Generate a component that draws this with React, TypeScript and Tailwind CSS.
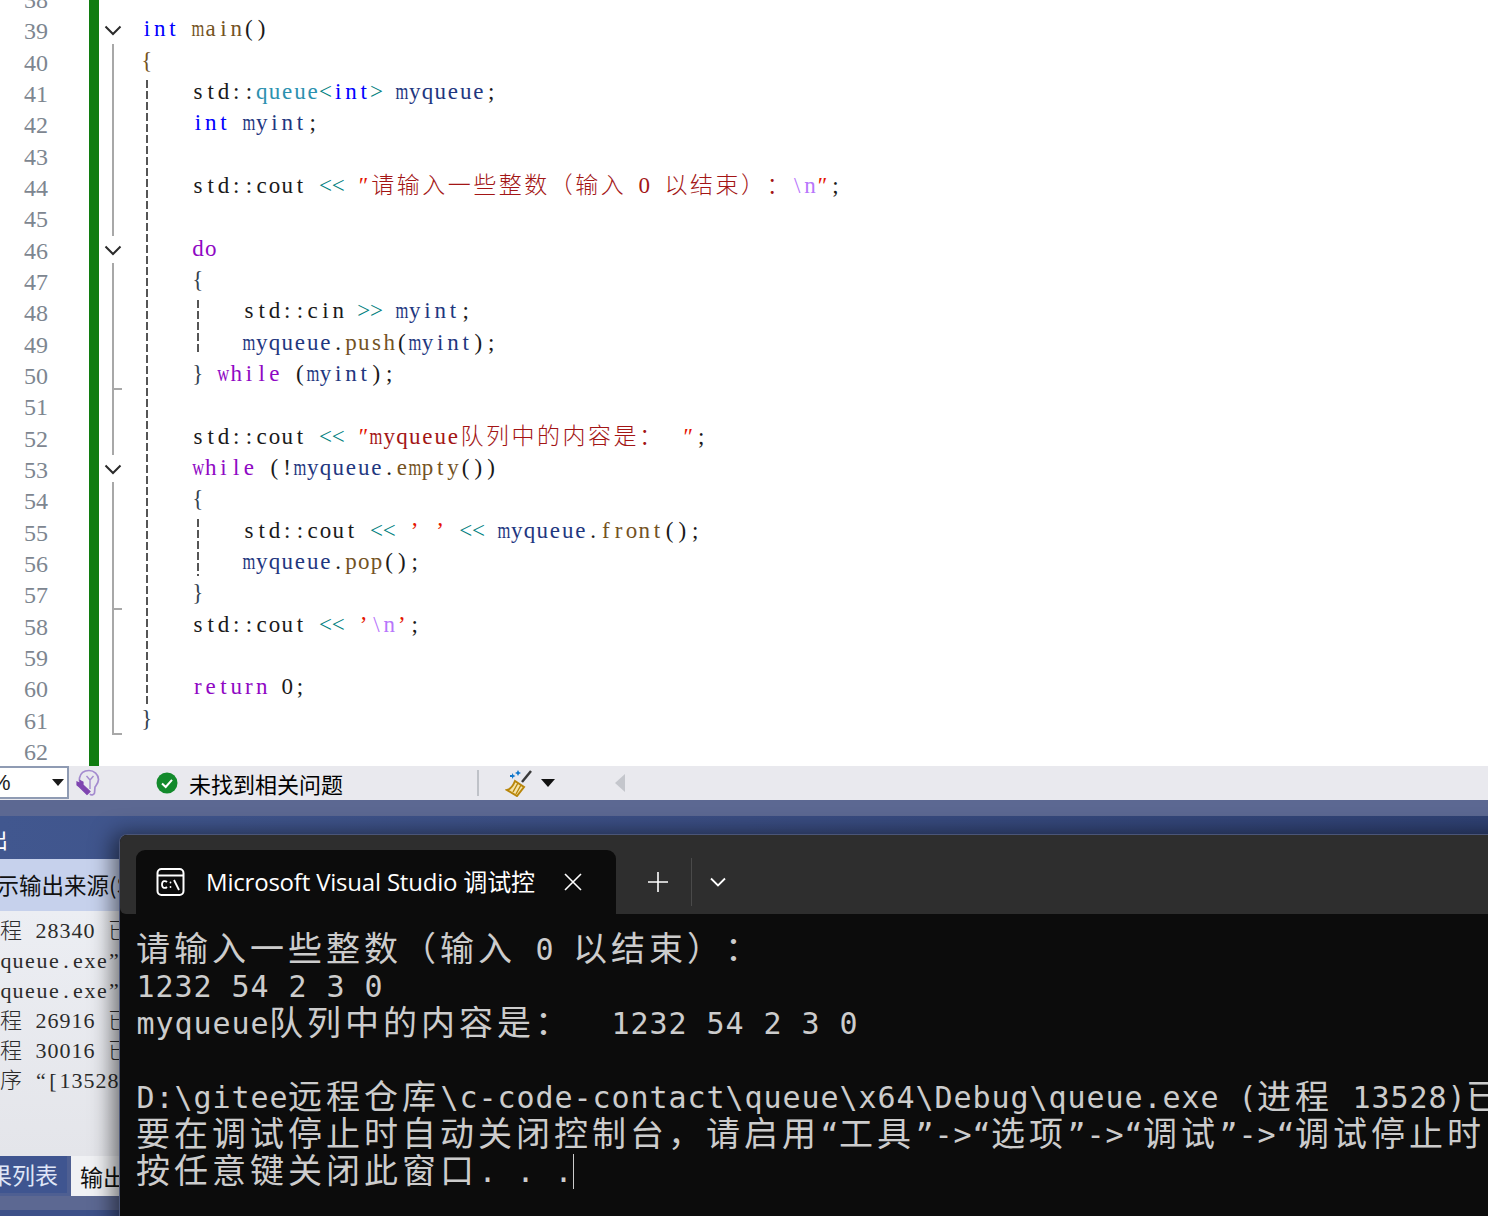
import React from "react";

type Tok = [string, string?];

const KW = "#0000ff";
const CTRL = "#8f08c4";
const FN = "#74531f";
const TYPE = "#2b91af";
const OP = "#008080";
const STR = "#a31515";
const ESC = "#b776fb";
const VAR = "#1f377f";
const BK = "#1a1a1a";
const QT = "#e51400";

const isWide = (c: string) => /[\u3000-\u303f\u3400-\u9fff\uff00-\uffef]/.test(c);

function Cells({ text, color, wideClass, narrowClass, squeeze }: { text: string; color?: string; wideClass: string; narrowClass: string; squeeze?: boolean }) {
  return (
    <>
      {Array.from(text).map((c, i) => {
        if (c === "\u2009") return <span key={i} className="inline-block w-[6px]">{"\u00a0"}</span>;
        const cls = isWide(c) ? wideClass : narrowClass;
        return (
          <span key={i} className={cls} style={color ? { color } : undefined}>
            {squeeze && /[mwMW]/.test(c) ? <span className="inline-block scale-x-[0.72]">{c}</span> : c === " " ? "\u00a0" : c}
          </span>
        );
      })}
    </>
  );
}

const CODE_W = "inline-flex w-[25.5px] justify-center font-['Noto_Sans_CJK_SC',sans-serif] text-[23px] font-light leading-none";
const CODE_N = "inline-flex w-[12.75px] justify-center font-['Liberation_Serif',serif] text-[23px] leading-none";
const TERM_W = "inline-flex w-[38px] -translate-x-[2px] -translate-y-[3px] justify-center font-['Noto_Sans_CJK_SC',sans-serif] text-[34px] leading-none";
const TERM_N = "inline-flex w-[19px] justify-center font-['DejaVu_Sans_Mono',monospace] text-[30px] leading-none";
const OUT_W = "inline-flex w-[24px] justify-center font-['Noto_Sans_CJK_SC',sans-serif] text-[22px] font-light leading-none";
const OUT_N = "inline-flex w-[12px] justify-center font-['Liberation_Serif',serif] text-[22px] leading-none";

type Fold = "none" | "open" | "line" | "corner" | "end";

const lines: { n: number; fold: Fold; indent: number; toks: Tok[] }[] = [
  { n: 38, fold: "none", indent: 0, toks: [] },
  { n: 39, fold: "open", indent: 0, toks: [["int", KW], [" "], ["main", FN], ["()", BK]] },
  { n: 40, fold: "line", indent: 0, toks: [["{", FN]] },
  { n: 41, fold: "line", indent: 1, toks: [["std::", BK], ["queue", TYPE], ["<", OP], ["int", KW], [">", OP], [" "], ["myqueue", VAR], [";", BK]] },
  { n: 42, fold: "line", indent: 1, toks: [["int", KW], [" "], ["myint", VAR], [";", BK]] },
  { n: 43, fold: "line", indent: 0, toks: [] },
  { n: 44, fold: "line", indent: 1, toks: [["std::cout", BK], [" "], ["<<", OP], [" "], ["″", QT], ["请输入一些整数（输入 0 以结束）：", STR], ["\\n", ESC], ["″", QT], [";", BK]] },
  { n: 45, fold: "line", indent: 0, toks: [] },
  { n: 46, fold: "open", indent: 1, toks: [["do", CTRL]] },
  { n: 47, fold: "line", indent: 1, toks: [["{", "#33424f"]] },
  { n: 48, fold: "line", indent: 2, toks: [["std::cin", BK], [" "], [">>", OP], [" "], ["myint", VAR], [";", BK]] },
  { n: 49, fold: "line", indent: 2, toks: [["myqueue", VAR], [".", BK], ["push", FN], ["(", BK], ["myint", VAR], [");", BK]] },
  { n: 50, fold: "corner", indent: 1, toks: [["}", "#33424f"], [" "], ["while", CTRL], [" "], ["(", BK], ["myint", VAR], [");", BK]] },
  { n: 51, fold: "line", indent: 0, toks: [] },
  { n: 52, fold: "line", indent: 1, toks: [["std::cout", BK], [" "], ["<<", OP], [" "], ["″", QT], ["myqueue队列中的内容是： \u2009", STR], ["″", QT], [";", BK]] },
  { n: 53, fold: "open", indent: 1, toks: [["while", CTRL], [" "], ["(!", BK], ["myqueue", VAR], [".", BK], ["empty", FN], ["())", BK]] },
  { n: 54, fold: "line", indent: 1, toks: [["{", "#33424f"]] },
  { n: 55, fold: "line", indent: 2, toks: [["std::cout", BK], [" "], ["<<", OP], [" "], ["’", QT], [" "], ["’", QT], [" "], ["<<", OP], [" "], ["myqueue", VAR], [".", BK], ["front", FN], ["();", BK]] },
  { n: 56, fold: "line", indent: 2, toks: [["myqueue", VAR], [".", BK], ["pop", FN], ["();", BK]] },
  { n: 57, fold: "corner", indent: 1, toks: [["}", "#33424f"]] },
  { n: 58, fold: "line", indent: 1, toks: [["std::cout", BK], [" "], ["<<", OP], [" "], ["’", QT], ["\\n", ESC], ["’", QT], [";", BK]] },
  { n: 59, fold: "line", indent: 0, toks: [] },
  { n: 60, fold: "line", indent: 1, toks: [["return", CTRL], [" "], ["0", BK], [";", BK]] },
  { n: 61, fold: "end", indent: 0, toks: [["}", "#33424f"]] },
  { n: 62, fold: "none", indent: 0, toks: [] },
];

function FoldCell({ fold }: { fold: Fold }) {
  if (fold === "open") {
    return (
      <div className="relative h-full w-[43px]">
        <svg className="absolute left-[5px] top-[7px]" width="18" height="14" viewBox="0 0 18 14" fill="none">
          <path d="M1.5 3.5 L9 11 L16.5 3.5" stroke="#2b2b2b" strokeWidth="2" />
        </svg>
        <div className="absolute bottom-0 left-[13px] h-[4px] w-[2px] bg-[#a8a8a8]" />
      </div>
    );
  }
  if (fold === "line") {
    return (
      <div className="h-full w-[43px] pl-[13px]">
        <div className="h-full w-[2px] bg-[#a8a8a8]" />
      </div>
    );
  }
  if (fold === "corner") {
    return (
      <div className="relative h-full w-[43px] pl-[13px]">
        <div className="h-full w-[2px] bg-[#a8a8a8]" />
        <div className="absolute bottom-[2px] left-[13px] h-[2px] w-[10px] bg-[#a8a8a8]" />
      </div>
    );
  }
  if (fold === "end") {
    return (
      <div className="h-full w-[43px] pl-[13px]">
        <div className="h-[calc(100%-2px)] w-[10px] border-b-2 border-l-2 border-[#a8a8a8]" />
      </div>
    );
  }
  return <div className="h-full w-[43px]" />;
}

function CodeRow({ line }: { line: (typeof lines)[number] }) {
  const pad = line.indent === 0 ? "pl-0" : line.indent === 1 ? "pl-[51px]" : "pl-[102px]";
  return (
    <div className="flex h-[31.33px] items-stretch">
      <div className="w-[89px] pr-[41px] text-right font-['Liberation_Serif',serif] text-[24px] leading-[31.33px] text-[#7d8690]">{line.n}</div>
      <div className="w-[10px] bg-[#107c10]" />
      <FoldCell fold={line.fold} />
      <div className={`-ml-[1.5px] -mt-[1px] flex-1 whitespace-nowrap leading-[31.33px] ${pad}`}>
        {line.toks.map((t, i) => (
          <Cells key={i} text={t[0]} color={t[1]} wideClass={CODE_W} narrowClass={CODE_N} squeeze />
        ))}
      </div>
    </div>
  );
}

const outRows = ["程 28340 已", "queue.exe”", "queue.exe”", "程 26916 已", "程 30016 已", "序 “[13528"];

const termRows = [
  "请输入一些整数（输入 0 以结束）：",
  "1232 54 2 3 0",
  "myqueue队列中的内容是：  1232 54 2 3 0",
  "",
  "D:\\gitee远程仓库\\c-code-contact\\queue\\x64\\Debug\\queue.exe (进程 13528)已",
  "要在调试停止时自动关闭控制台，请启用“工具”->“选项”->“调试”->“调试停止时",
  "按任意键关闭此窗口. . .",
];

const GUIDE = "absolute w-[2px] bg-[repeating-linear-gradient(to_bottom,#555_0,#555_8px,transparent_8px,transparent_11px)]";

export default function App() {
  return (
    <div className="flex h-[1216px] w-[1488px] flex-col overflow-hidden bg-white">
      {/* Editor */}
      <div className="relative h-[766px] shrink-0 overflow-hidden bg-white">
        <div className="-mt-[15px]">
          {lines.map((l) => (
            <CodeRow key={l.n} line={l} />
          ))}
        </div>
        <div className={`${GUIDE} left-[146px] top-[80px] h-[625px]`} />
        <div className={`${GUIDE} left-[197px] top-[300px] h-[55px]`} />
        <div className={`${GUIDE} left-[197px] top-[519px] h-[57px]`} />
      </div>

      {/* Status bar */}
      <div className="flex h-[34px] shrink-0 items-center bg-[#e9e9ee]">
        <div className="flex h-[33px] w-[69px] items-center justify-between self-start border-2 border-l-0 border-[#8f9bb3] bg-white pr-[3px]">
          <span className="-ml-[9px] font-['Liberation_Sans',sans-serif] text-[22px] text-[#222]">%</span>
          <svg width="12" height="7" viewBox="0 0 12 7"><path d="M0 0 H12 L6 7 Z" fill="#1a1a1a" /></svg>
        </div>
        <svg className="ml-[6px]" width="26" height="28" viewBox="0 0 26 28" fill="none" stroke="#a48bcf" strokeWidth="1.7">
          <path d="M8 17 C5 15 4 12 4.5 9 C5.5 4 9.5 1.5 14 1.5 C19 1.5 23.5 5.5 23.5 10.5 C23.5 14 21.5 16 20 18 L19.5 24 C19 26 16 26.5 15 25" />
          <path d="M15 20 V11 M15 11 L11.5 7 M15 11 L18.5 7" strokeWidth="1.4" />
          <path d="M2 13 L2 16 L4.5 18 L12 25.5 L15 22.5 L8 16 L8 13 L5 11.5 L5.5 14.5 Z" fill="#7f45b0" stroke="#7f45b0" strokeWidth="1.2" />
        </svg>
        <svg className="ml-[55px]" width="22" height="22" viewBox="0 0 22 22">
          <circle cx="11" cy="11" r="10.5" fill="#138a2c" />
          <path d="M6 11.5 L9.7 15 L16 7.8" fill="none" stroke="white" strokeWidth="2" />
        </svg>
        <span className="ml-[11px] font-['Noto_Sans_CJK_SC',sans-serif] text-[22px] leading-none text-black">未找到相关问题</span>
        <div className="ml-[134px] h-[26px] w-[2px] bg-[#bfc2c8]" />
        <svg className="ml-[26px]" width="30" height="28" viewBox="0 0 30 28" fill="none">
          <path d="M26 2 L17 13" stroke="#3a3a3a" strokeWidth="2.5" />
          <path d="M10 12 L19 18 L12 27 L2 21 C6 20 8 17 10 12 Z" fill="#f5e3a8" stroke="#b8860b" strokeWidth="2" />
          <path d="M13 14 L8 23 M16 16 L11 25" stroke="#b8860b" strokeWidth="1.4" />
          <path d="M5 6 L7 6 L7 4 L8.5 6 L10.5 7 L8.5 8 L7 10 L7 8 L5 8 Z M13 1 L14 3 L16 4 L14 5 L13 7 L12 5 L10 4 L12 3 Z" fill="#1177cc" />
        </svg>
        <svg className="ml-[6px]" width="14" height="8" viewBox="0 0 14 8"><path d="M0 0 H14 L7 8 Z" fill="#111" /></svg>
        <svg className="ml-[60px]" width="10" height="18" viewBox="0 0 10 18"><path d="M10 0 V18 L0 9 Z" fill="#c4c6cc" /></svg>
      </div>

      {/* Lower area */}
      <div className="relative flex min-h-0 flex-1 flex-col overflow-hidden">
        <div className="h-[16px] shrink-0 bg-[#5c6892]" />
        <div className="h-[43px] shrink-0 bg-gradient-to-r from-[#41578f] via-[#3a4d82] to-[#2f4173] pt-[8px] font-['Noto_Sans_CJK_SC',sans-serif] text-[22px] leading-[28px] text-white">
          <span className="-ml-[36px] inline-block">输出</span>
        </div>
        <div className="flex h-[52px] shrink-0 items-center bg-[#c6d1ec] font-['Noto_Sans_CJK_SC',sans-serif] text-[22.5px] whitespace-nowrap text-[#111]">
          <span className="-ml-[26px]">显示输出来源(S)</span>
        </div>
        <div className="h-[245px] shrink-0 bg-gradient-to-b from-[#eceef3] to-[#e4e5ea] pt-[6px]">
          {outRows.map((r, i) => (
            <div key={i} className={`h-[30px] whitespace-nowrap leading-[30px] text-[#2b2b2b] ${r.startsWith("queue") ? "" : "-ml-[1px]"}`}>
              <Cells text={r} wideClass={OUT_W} narrowClass={OUT_N} />
            </div>
          ))}
        </div>
        <div className="flex h-[40px] shrink-0 items-start gap-[4px] bg-[#4e5f92]">
          <div className="flex h-[37px] w-[67px] items-center justify-end bg-[#3f5590] pr-[9px] font-['Noto_Sans_CJK_SC',sans-serif] text-[23px] whitespace-nowrap text-[#dfe6f7]">结果列表</div>
          <div className="flex h-[40px] w-[60px] items-center bg-[#f0f1f4] pl-[9px] font-['Noto_Sans_CJK_SC',sans-serif] text-[23px] whitespace-nowrap text-[#111]">输出</div>
        </div>
        <div className="h-[14px] shrink-0 bg-[#5c6892]" />
        <div className="flex-1 bg-[#3d5088]" />

        {/* Terminal window */}
        <div className="absolute left-[119px] top-[34px] flex h-[400px] w-[1400px] flex-col overflow-hidden rounded-tl-[8px] border-l border-t border-[#4a5578] bg-[#0c0c0c] shadow-[-6px_0_22px_rgba(0,0,0,0.55)]">
          <div className="flex h-[79px] shrink-0 items-end rounded-b-[6px] bg-[#2e2e2e] pl-[16px]">
            <div className="flex h-[64px] w-[480px] items-center rounded-t-[9px] bg-[#0c0c0c] pl-[20px]">
              <svg width="29" height="30" viewBox="0 0 29 30" fill="none" stroke="white" strokeWidth="2">
                <rect x="1.5" y="2" width="26" height="26" rx="4" />
                <path d="M1.5 8.5 H27.5" />
                <path d="M11 15 C9.5 13.5 6 13.5 6 17.5 C6 21.5 9.5 21.5 11 20" strokeWidth="1.8" />
                <circle cx="14.5" cy="15.5" r="0.9" fill="white" stroke="none" />
                <circle cx="14.5" cy="20" r="0.9" fill="white" stroke="none" />
                <path d="M18 13 L23 23" strokeWidth="1.8" />
              </svg>
              <span className="ml-[21px] w-[333px] whitespace-nowrap font-['Open_Sans','Noto_Sans_CJK_SC',sans-serif] text-[24px] leading-none tracking-[-0.2px] text-white">Microsoft Visual Studio 调试控</span>
              <svg className="ml-[24px]" width="20" height="20" viewBox="0 0 20 20" stroke="white" strokeWidth="1.6"><path d="M2 2 L18 18 M18 2 L2 18" /></svg>
            </div>
            <div className="mb-[8px] ml-[32px] flex h-[48px] items-center">
              <svg width="20" height="20" viewBox="0 0 20 20" stroke="white" strokeWidth="1.6"><path d="M10 0 V20 M0 10 H20" /></svg>
              <div className="ml-[23px] h-[48px] w-px bg-[#4a4a4a]" />
              <svg className="ml-[18px]" width="16" height="10" viewBox="0 0 16 10" fill="none" stroke="white" strokeWidth="1.8"><path d="M1 1.5 L8 8.5 L15 1.5" /></svg>
            </div>
          </div>
          <div className="flex-1 pl-[16px] pt-[17px] text-[#cccccc]">
            {termRows.map((r, i) => (
              <div key={i} className="flex h-[37px] items-center whitespace-nowrap">
                <Cells text={r} wideClass={TERM_W} narrowClass={TERM_N} />
                {i === 6 && <span className="inline-block h-[35px] w-px bg-[#cccccc]" />}
              </div>
            ))}
          </div>
        </div>
      </div>
    </div>
  );
}
